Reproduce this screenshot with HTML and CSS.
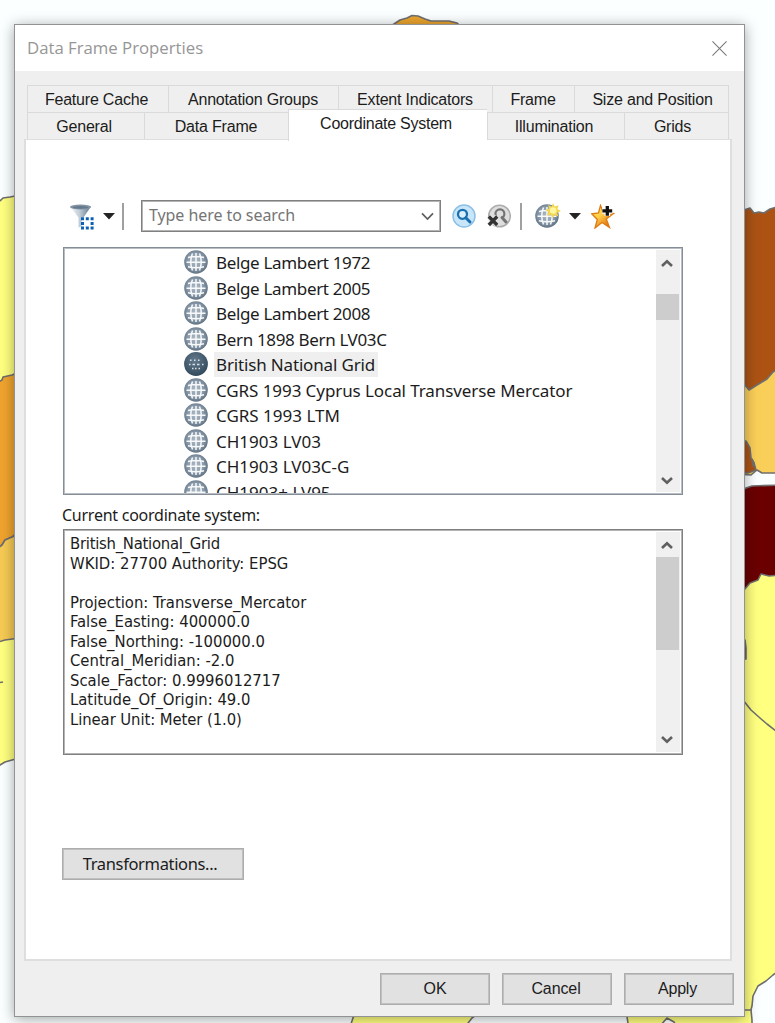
FILE: index.html
```
<!DOCTYPE html>
<html lang="en">
<head>
<meta charset="utf-8">
<title>Data Frame Properties</title>
<link rel="stylesheet" href="styles.css">
</head>
<body>
<svg class="map" viewBox="0 0 775 1023" aria-hidden="true">
  <g stroke="#6f6f6f" stroke-width="1.6" stroke-linejoin="round">
    <path fill="#eba42f" d="M384 30L394 24L400 20L407 18L412 15.500L418 16L425 19L431 21L449 21L457 23L464 29Z"/>
    <path fill="#ffff80" d="M-5 204L1 200L3 198L10 197L20 195V370L12 376L-5 384Z"/>
    <path fill="#f0a42e" d="M-5 384L2 380L3 377L12 375L20 372V530L12 537L5 540L2 545L-5 550Z"/>
    <path fill="#f6ca54" d="M-5 550L2 545L5 540L12 537L20 533V642L-5 645Z"/>
    <path fill="#ffff80" d="M-5 643L5 640L20 638V758L12 760L5 762L-5 768Z"/>
    <path fill="none" d="M-3 683L3 682"/>
    <path fill="#ac5314" d="M738 214L744 210L750 208L754 213L759 212L764 213L770 209L780 206V390L735 396Z"/>
    <path fill="#facf59" d="M780 368L773 372L767 379L757 385L749 390L744 384L735 396V474L751 475L757 470L762 473L780 473Z"/>
    <path fill="#ac5314" d="M735 441L746 441L750 448L751 458L754 463L756 470L748 473L735 473Z"/>
    <path fill="#fcffff" d="M752 459L754 463L753 466Z"/>
    <path fill="#6b0000" d="M740 492L746 488L752 486L780 485V574L740 594Z"/>
    <path fill="#ffff80" d="M735 596L744 590L750 583L758 580L761 574L769 576L780 575V970L773 975L766 981L758 986L753 996L752 1006L749 1017L750 1030H740V900H735Z"/>
    <path fill="#85352b" d="M740 636L745 640L746 648L746 659L740 660Z"/>
    <path fill="none" d="M743 700L751 710L760 718L767 724L780 734"/>
    <path fill="#ffff80" d="M355 1012H480L472 1018L465 1027H350Z"/>
    <path fill="#ffff80" d="M626 1010H751L752 1020V1030H629Z"/>
    <path fill="#fcffff" d="M660 1026L667 1018L674 1022L677 1027Z"/>
  </g>
</svg>

<svg class="defs" aria-hidden="true">
  <defs>
    <radialGradient id="steel" cx=".48" cy=".46" r=".55">
      <stop offset="0" stop-color="#aebac5"/><stop offset=".6" stop-color="#8c9cac"/><stop offset="1" stop-color="#5e7081"/>
    </radialGradient>
    <radialGradient id="dark" cx=".45" cy=".35" r=".65">
      <stop offset="0" stop-color="#657b8d"/><stop offset="1" stop-color="#33495c"/>
    </radialGradient>
    <linearGradient id="funnel"><stop offset="0" stop-color="#f4f7f9"/><stop offset=".45" stop-color="#c2ced8"/><stop offset="1" stop-color="#60758a"/></linearGradient>
    <linearGradient id="gold" x2=".8" y2="1"><stop offset="0" stop-color="#ffe264"/><stop offset=".45" stop-color="#ffcf4a"/><stop offset="1" stop-color="#dc6000"/></linearGradient>
    <symbol id="globe" viewBox="0 0 24 24">
      <circle cx="12" cy="12" r="11.800" fill="url(#steel)"/>
      <g fill="none" stroke="#f7f9fb" stroke-width="1.500">
        <path d="M4 7.500Q12 5.500 20 7.500M2.500 12.200H21.500M4 16.700Q12 18.700 20 16.700M12 3V21"/>
        <path d="M8.500 3.500Q5 12 8.500 20.500M15.500 3.500Q19 12 15.500 20.500"/>
      </g>
    </symbol>
    <symbol id="globe-selected" viewBox="0 0 24 24">
      <circle cx="12" cy="12" r="11.900" fill="url(#dark)"/>
      <g fill="none" stroke="#d8e1e8" stroke-width="1.500">
        <path d="M6 8.300h1.500M10 8.300h1.500M14 8.300h1.500M5 12.500h1.500M8.500 12.500h2.500M13 12.500h2.500M18 12.500h1.500M8 16.500h1.500M11 16.500h1.500M14.500 16.500h1.500"/>
      </g>
    </symbol>
    <symbol id="arrow" viewBox="0 0 12 10"><path d="M1 7L6 2.200L11 7" fill="none" stroke="#606060" stroke-width="2.600"/></symbol>
  </defs>
</svg>

<main class="dialog">
  <header class="titlebar">
    <h1 class="title">Data Frame Properties</h1>
    <svg class="close" viewBox="0 0 16 16"><path d="M.5.5L15.500 15.500M15.500.5L.5 15.500" stroke="#777" stroke-width="1.100"/></svg>
  </header>

  <nav class="tabs">
    <div class="tabrow upper">
      <span class="tab first">Feature Cache</span><span class="tab">Annotation Groups</span><span class="tab">Extent Indicators</span><span class="tab">Frame</span><span class="tab last">Size and Position</span>
    </div>
    <div class="tabrow lower">
      <span class="tab general">General</span><span class="tab">Data Frame</span><span class="tab selected">Coordinate System</span><span class="tab illumination">Illumination</span><span class="tab grids">Grids</span>
    </div>
  </nav>

  <section class="panel">
    <div class="toolbar">
      <svg class="i-funnel" viewBox="0 0 26 26">
        <path d="M1 2.500L9.500 13.500V23.500L14.500 21.500V13.500L22 2.500Z" fill="url(#funnel)"/>
        <ellipse cx="11.500" cy="3" rx="10.500" ry="2.600" fill="#8395a5"/><ellipse cx="11.500" cy="3.400" rx="8" ry="1.300" fill="#64798b"/>
        <path fill="#fff" d="M12.500 13h13v13h-13z"/>
        <path fill="#0c5fb3" d="M12 13.300h3v3h-3zm4.800 0h3v3h-3zm4.800 0h3v3h-3zM12 18h3v3h-3zm9.600 0h3v3h-3zM12 22.600h3v3h-3zm4.800 0h3v3h-3zm4.800 0h3v3h-3z"/>
      </svg>
      <svg class="i-drop first" viewBox="0 0 12 7"><path d="M0 0H12L6 6.500Z" fill="#242424"/></svg>
      <span class="divider one"></span>
      <div class="combo"><span class="placeholder">Type here to search</span>
        <svg class="chevron" viewBox="0 0 13 9"><path d="M1 1.300L6.500 7L12 1.300" fill="none" stroke="#5f5f5f" stroke-width="1.700"/></svg>
      </div>
      <svg class="i-find" viewBox="0 0 24 24">
        <circle cx="12" cy="12" r="11" fill="#c8e6fa" stroke="#8dc0e4" stroke-width="1.500"/>
        <circle cx="10.500" cy="10.300" r="4.500" fill="#d9effd" stroke="#1b6fae" stroke-width="2.300"/>
        <path d="M13.800 13.700L18 18" stroke="#1b6fae" stroke-width="3" stroke-linecap="round"/>
      </svg>
      <svg class="i-clear" viewBox="0 0 24 24">
        <circle cx="12.500" cy="12" r="10.800" fill="#dedede" stroke="#adadad" stroke-width="1.500"/>
        <path d="M9 12A4.500 4.500 0 1 1 15 13.800" fill="none" stroke="#747474" stroke-width="2.200"/>
        <path d="M15 13.500L19 18" stroke="#747474" stroke-width="3" stroke-linecap="round"/>
        <path d="M1.800 12.500L10.200 21M10.200 12.500L1.800 21" stroke="#eee" stroke-width="5"/>
        <path d="M1.800 12.500L10.200 21M10.200 12.500L1.800 21" stroke="#343434" stroke-width="3.400"/>
      </svg>
      <span class="divider two"></span>
      <svg class="i-newglobe" viewBox="0 0 26 26">
        <use href="#globe" width="24" height="24" y="1"/>
        <path d="M18 0L19.700 3.600L23.600 2.200L22.400 6L26 8L22.200 9.700L23.400 13.400L19.600 12L17.600 15L15.800 11.800L12 12.700L13.300 9L10.500 7L14 5.500L13.200 2L16.700 3.500Z" fill="#f2d654"/>
        <circle cx="18.200" cy="7.500" r="3.200" fill="#fff7a0"/>
      </svg>
      <svg class="i-drop second" viewBox="0 0 12 7"><path d="M0 0H12L6 6.500Z" fill="#242424"/></svg>
      <svg class="i-star" viewBox="0 0 25 25">
        <path d="M9.500 1.500L12.500 9L22.500 9.500L15.300 15L18.500 23.500L11 18.500L4 24L6.300 15.500L.8 9.800L7.500 9Z" fill="url(#gold)" stroke="#dc7b14" stroke-width="1.300"/>
        <path d="M16.300 1.800V12M11.200 6.900H21.400" stroke="#fff" stroke-width="5.600"/>
        <path d="M16.300 2V11.800M11.400 6.900H21.200" stroke="#111" stroke-width="3.300"/>
      </svg>
    </div>

    <div class="tree">
      <ul class="items">
        <li class="tight"><svg><use href="#globe"/></svg><span>Belge Lambert 1972</span></li>
        <li class="tight"><svg><use href="#globe"/></svg><span>Belge Lambert 2005</span></li>
        <li class="tight"><svg><use href="#globe"/></svg><span>Belge Lambert 2008</span></li>
        <li class="tight"><svg><use href="#globe"/></svg><span>Bern 1898 Bern LV03C</span></li>
        <li class="current"><svg><use href="#globe-selected"/></svg><span>British National Grid</span></li>
        <li class="long"><svg><use href="#globe"/></svg><span>CGRS 1993 Cyprus Local Transverse Mercator</span></li>
        <li><svg><use href="#globe"/></svg><span>CGRS 1993 LTM</span></li>
        <li><svg><use href="#globe"/></svg><span>CH1903 LV03</span></li>
        <li><svg><use href="#globe"/></svg><span>CH1903 LV03C-G</span></li>
        <li><svg><use href="#globe"/></svg><span>CH1903+ LV95</span></li>
      </ul>
      <div class="scroll"><svg class="arrow"><use href="#arrow"/></svg><i class="thumb"></i><svg class="arrow down"><use href="#arrow"/></svg></div>
    </div>

    <p class="label">Current coordinate system:</p>
    <div class="details">
      <pre class="text"><span class="name">British_National_Grid</span>
WKID: 27700 Authority: EPSG

Projection: Transverse_Mercator
False_Easting: 400000.0
False_Northing: -100000.0
Central_Meridian: -2.0
Scale_Factor: 0.9996012717
Latitude_Of_Origin: 49.0
<span class="unit">Linear Unit: Meter (1.0)</span></pre>
      <div class="scroll"><svg class="arrow"><use href="#arrow"/></svg><i class="thumb"></i><svg class="arrow down"><use href="#arrow"/></svg></div>
    </div>
    <button class="btn transform">Transformations...</button>
  </section>

  <footer class="actions">
    <button class="btn">OK</button><button class="btn cancel">Cancel</button><button class="btn apply">Apply</button>
  </footer>
</main>
</body>
</html>
```
FILE: styles.css
```
* { box-sizing: border-box; }
body { margin: 0; width: 775px; height: 1023px; overflow: hidden; background: #fcffff; padding: 24px 0 0 14px; font-family: "Noto Sans", sans-serif; color: #1c1c1c; }
.map { position: absolute; left: 0; top: 0; width: 775px; height: 1023px; }
.defs { position: absolute; width: 0; height: 0; }
.dialog { position: relative; display: flex; flex-direction: column; width: 731px; height: 993px; background: #efefef; border: 1px solid #929292; box-shadow: 0 2px 13px rgba(0,0,0,.36); }
.titlebar { flex: none; height: 46px; background: #fff; display: flex; align-items: center; justify-content: space-between; padding: 0 17px 0 12px; }
.title { margin: 0; font: 400 16.8px/24px "Open Sans", sans-serif; letter-spacing: -.02px; color: #969696; }
.close { width: 15px; height: 15px; }

.tabs { flex: none; padding: 14px 0 0 12px; font-family: "Liberation Sans", sans-serif; font-size: 16px; letter-spacing: -.2px; }
.tabrow { display: grid; width: 702px; height: 27px; }
.upper { grid-template-columns: 141px 170px 154px 82px 155px; }
.lower { grid-template-columns: 117px 144px 199px 137px 105px; }
.tab { display: flex; align-items: center; justify-content: center; white-space: nowrap; border: solid #dadada; border-width: 1px 0 0 1px; padding: 2px 1px 0 0; }
.lower .tab { padding-top: 0; }
.tab:last-child { border-right-width: 1px; }
.tab.first { padding-right: 3px; }
.tab.last { padding: 2px 0 0 2px; }
.tab.general { padding-right: 4px; }
.tab.illumination { padding-right: 4px; }
.tab.grids { padding-right: 8px; }
.lower .tab.selected { background: #fff; height: 32px; margin: -3px 0 0; position: relative; z-index: 1; padding: 0 4px 3px 0; letter-spacing: -.25px; }

.panel { flex: none; width: 708px; height: 822px; margin-left: 9px; border: 2px solid #dedede; border-width: 1px 2px 2px; background: #fff; padding: 60px 0 0 37px; display: flex; flex-direction: column; align-items: flex-start; }
.toolbar { display: flex; align-items: center; height: 32px; padding-left: 6px; }
.toolbar > * { flex: none; }
.i-funnel { width: 26px; height: 26px; margin-top: 2px; }
.i-drop { width: 12px; height: 7px; }
.i-drop.first { margin-left: 8px; }
.divider { width: 2px; height: 27px; background: #a0a0a0; }
.divider.one { margin-left: 7px; }
.combo { display: flex; align-items: center; justify-content: space-between; width: 300px; height: 32px; margin-left: 17px; border: 1px solid #808080; box-shadow: inset 0 0 0 1px #b4b4b4; padding: 0 6px 0 7px; color: #757575; }
.placeholder { font: 16px/24px "Noto Sans", sans-serif; white-space: nowrap; letter-spacing: -.07px; margin-top: -2px; }
.chevron { width: 13px; height: 9px; }
.i-find { width: 24px; height: 24px; margin-left: 11px; }
.i-clear { width: 24px; height: 24px; margin-left: 11px; }
.divider.two { margin-left: 9px; }
.i-newglobe { width: 26px; height: 26px; margin-left: 13px; }
.i-drop.second { margin-left: 8px; }
.i-star { width: 25px; height: 25px; margin-left: 10px; }

.tree, .details { display: flex; justify-content: space-between; width: 620px; border: 1px solid #858d97; box-shadow: inset 0 0 0 1px #b8bec4; overflow: hidden; }
.tree { height: 248px; margin-top: 15px; padding: 2px 2px 2px 120px; }
.items { list-style: none; margin: 0; padding: 0; height: 243px; overflow: hidden; }
.items li { display: flex; align-items: center; height: 25.5px; white-space: nowrap; font-size: 17px; line-height: 25px; }
.items svg { width: 24px; height: 24px; margin: -1px 6px 0 0; }
.items span { padding: 0 3px 0 2px; }
.items .tight { letter-spacing: -.34px; }
.items .current { letter-spacing: -.16px; }
.items .long { letter-spacing: -.08px; }
.current span { background: #efefef; }
.scroll { display: flex; flex-direction: column; width: 24px; background: #f0f0f0; align-items: stretch; }
.thumb { background: #cdcdcd; width: 23px; }
.arrow { width: 12px; height: 10px; margin-left: 5px; }
.down { transform: rotate(180deg); margin-top: auto; }
.tree .arrow:first-child { margin-top: 9px; }
.tree .thumb { height: 26px; margin-top: 25px; }
.tree .down { margin-bottom: 7px; }
.label { margin: 8px 0 0 -1px; font: 16px/24px "Noto Sans", sans-serif; letter-spacing: -.25px; white-space: nowrap; }
.details { height: 226px; margin-top: 2px; padding: 2px 2px 2px 6px; border-color: #808080; box-shadow: inset 0 0 0 1px #b4b4b4; }
.text { margin: 2px 0 0; font: 16.5px/19.5px "DejaVu Sans Condensed", sans-serif; }
.name { letter-spacing: -.26px; }
.unit { letter-spacing: -.08px; }
.details .arrow:first-child { margin-top: 9px; }
.details .thumb { height: 93px; margin-top: 6px; }
.details .down { margin-bottom: 8px; }
.btn { height: 32px; padding: 0; border: 1px solid #adadad; box-shadow: inset 0 0 0 1px #c0c0c0; background: #e1e1e1; color: #1c1c1c; font: 16px/24px "Liberation Sans", sans-serif; }
.transform { width: 182px; margin: 93px 0 0 -1px; font: 16.5px/24px "Noto Sans", sans-serif; letter-spacing: -.35px; padding-right: 6px; }
.actions { display: flex; justify-content: flex-end; gap: 12px; padding: 12px 10px 0 0; }
.actions .btn { width: 110px; letter-spacing: -.1px; }
.actions .apply { padding-right: 3px; letter-spacing: -.2px; }
.actions .cancel { padding-right: 2px; }
```
